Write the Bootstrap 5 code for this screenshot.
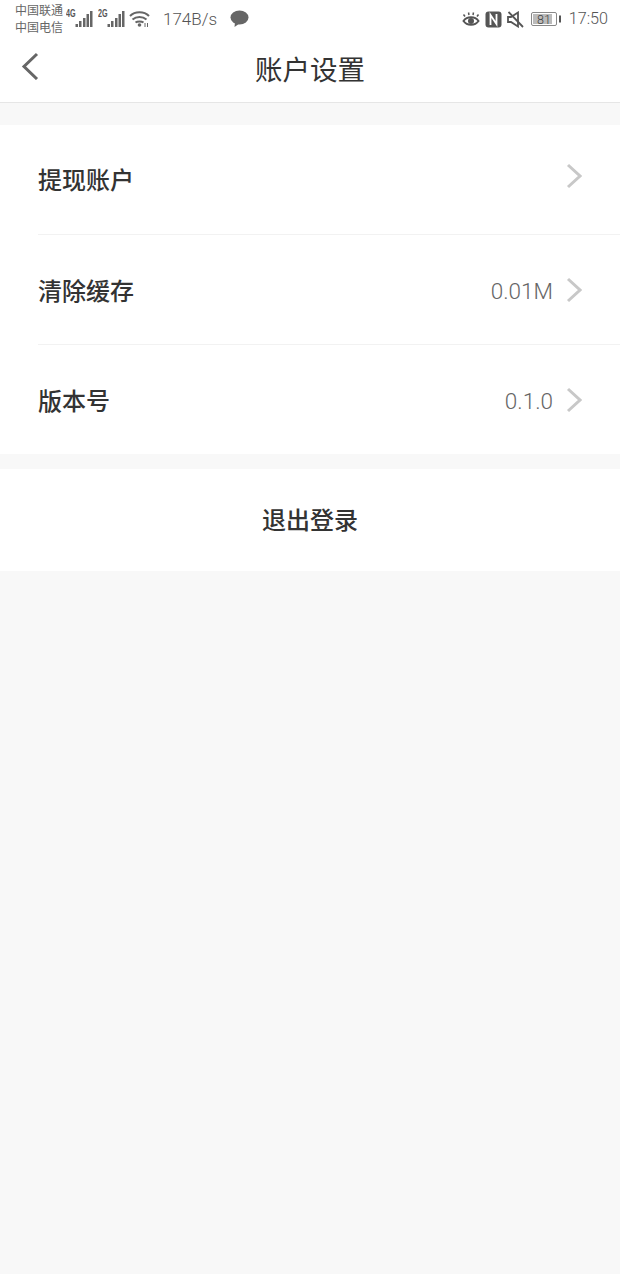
<!DOCTYPE html>
<html lang="zh">
<head>
<meta charset="utf-8">
<title>账户设置</title>
<link rel="stylesheet" href="https://cdn.jsdelivr.net/npm/bootstrap@5.3.0/dist/css/bootstrap.min.css">
<style>
html,body{height:100%}
body{background:#f8f8f8;font-family:"Noto Sans CJK SC","Noto Sans",sans-serif;color:#333}
.screen-wrap{width:620px;height:1274px;overflow:hidden}
.top-area{height:103px;background:#fff;border-bottom:1px solid #e6e6e6}
.status-row{height:38px;padding:0 12px 0 15px;color:#555}
.carriers{font-size:12px;line-height:17px;width:51px;color:#666;margin-top:-3px}
.net-tag{font-family:"Liberation Sans",sans-serif;font-size:10px;font-weight:700;line-height:8px;color:#555;align-self:flex-start;margin-top:10px;width:9px;display:inline-block;transform:scaleX(.72);transform-origin:left top;white-space:nowrap}
.tag-second{margin-left:5px}
.icon-wifi{margin-left:4px}
.speed{font-family:"Roboto",sans-serif;font-weight:300;font-size:17px;color:#555;margin-left:13px;margin-right:13px;line-height:38px;width:54px;white-space:nowrap}
.clock{font-family:"Roboto",sans-serif;font-weight:300;font-size:16.200px;color:#555;line-height:38px;margin-left:7px}
.icon-nfc{margin-left:5px}
.icon-mute{margin-left:5px}
.icon-batt{margin-left:7px}
.title-row{height:64px}
.back-btn{left:21px;top:16px;line-height:0}
.page-title{font-size:27.500px;font-weight:400;color:#333;line-height:64px;margin-top:-2px}
.section-gap{height:22px}
.set-list{background:#fff}
.set-row{height:110px;padding-left:38px}
.set-row:last-child{height:109px}
.set-inner{height:100%;border-bottom:1px solid #f2f2f2;padding-right:38px}
.set-row:last-child .set-inner{border-bottom:0}
.set-label{font-size:24px;font-weight:500;color:#333;line-height:34px}
.label-high{margin-top:-2px}
.set-value{font-family:"Roboto",sans-serif;font-weight:300;font-size:22.500px;color:#666;margin-right:13px;line-height:34px;margin-top:2px}
.set-arrow{line-height:0;margin-top:1px}
.arrow-high{margin-top:-8px}
.logout-wrap{margin-top:15px;height:102px;background:#fff;font-size:24px;font-weight:500;color:#333;padding-bottom:2px}
</style>
</head>
<body>
<div class="screen-wrap">
  <div class="top-area">
    <div class="status-row d-flex align-items-center">
      <div class="carriers">中国联通<br>中国电信</div>
      <span class="net-tag">4G</span>
      <svg width="18" height="18" viewBox="0 0 18 18" fill="#666"><rect x=".5" y="14" width="2.500" height="3"/><rect x="4" y="11" width="2.500" height="6"/><rect x="8" y="8" width="2.500" height="9"/><rect x="11.500" y="4" width="2.500" height="13"/><rect x="15" y="1" width="2.500" height="16"/></svg>
      <span class="net-tag tag-second">2G</span>
      <svg width="18" height="18" viewBox="0 0 18 18" fill="#666"><rect x=".5" y="14" width="2.500" height="3"/><rect x="4" y="11" width="2.500" height="6"/><rect x="8" y="8" width="2.500" height="9"/><rect x="11.500" y="4" width="2.500" height="13"/><rect x="15" y="1" width="2.500" height="16"/></svg>
      <svg width="21" height="18" viewBox="0 0 21 18" class="icon-wifi" fill="none" stroke="#666" stroke-width="2"><path d="M1 6C6 1 15 1 20 6"/><path d="M3.500 9.500C7.500 6 13.500 6 17.500 9.500"/><path d="M6.500 12.500C8.500 11 12.500 11 14.500 12.500"/><circle cx="10.500" cy="15" r="1.800" fill="#666" stroke="none"/><path d="M16 13v4M18.500 13v4" stroke-width="1"/></svg>
      <span class="speed">174B/s</span>
      <svg width="19" height="18" viewBox="0 0 19 18"><ellipse cx="9.500" cy="7.500" rx="9" ry="7" fill="#666"/><path d="M5 12l-.5 5 5-3.500z" fill="#666"/></svg>
      <div class="ms-auto d-flex align-items-center">
        <svg width="18" height="17" viewBox="0 0 18 17" fill="none" stroke="#555" stroke-width="2"><path d="M1.500 10C5 5 13 5 16.500 10C13 15 5 15 1.500 10z"/><circle cx="9" cy="10" r="3" fill="#555" stroke="none"/><path d="M3 5.500L1.500 3.500M7 4L6.500 1.500M11 4L11.500 1.500M15 5.500l1.500-2" stroke-width="1.500"/></svg>
        <svg width="17" height="17" viewBox="0 0 17 17" class="icon-nfc" fill="none"><rect x=".5" y=".5" width="16" height="16" rx="3" fill="#555"/><path d="M5.500 14V4l6 9V3" stroke="#fff" stroke-width="1.800"/></svg>
        <svg width="17" height="17" viewBox="0 0 17 17" class="icon-mute" fill="none" stroke="#555" stroke-width="1.800"><path d="M1 6v5h3l7 4.500V1.500L4 6z"/><path d="M1.500 1l14.500 15"/></svg>
        <svg width="31" height="14" viewBox="0 0 31 14" class="icon-batt"><rect x=".5" y=".5" width="25" height="13" rx="1.500" fill="#fff" stroke="#888"/><rect x="2" y="2" width="19" height="10" fill="#bbb"/><text x="13" y="11.500" text-anchor="middle" font-size="12.500" fill="#444" font-family="Roboto, sans-serif" font-weight="300">81</text><rect x="28" y="3.500" width="2" height="7" fill="#555"/></svg>
        <span class="clock">17:50</span>
      </div>
    </div>
    <div class="title-row position-relative text-center">
      <a class="back-btn position-absolute" href="#" aria-label="返回"><svg width="18" height="28" viewBox="0 0 18 28" fill="none" stroke="#666" stroke-width="3"><path d="M16 2L3 14.500 16 27"/></svg></a>
      <div class="page-title">账户设置</div>
    </div>
  </div>
  <div class="section-gap"></div>
  <div class="set-list">
    <div class="set-row"><div class="set-inner d-flex align-items-center"><span class="set-label label-high">提现账户</span><span class="ms-auto set-arrow arrow-high"><svg width="16" height="26" viewBox="0 0 16 26" fill="none" stroke="#c8c8c8" stroke-width="3"><path d="M2 2l12 11L2 24"/></svg></span></div></div>
    <div class="set-row"><div class="set-inner d-flex align-items-center"><span class="set-label">清除缓存</span><span class="ms-auto set-value">0.01M</span><span class="set-arrow"><svg width="16" height="26" viewBox="0 0 16 26" fill="none" stroke="#c8c8c8" stroke-width="3"><path d="M2 2l12 11L2 24"/></svg></span></div></div>
    <div class="set-row"><div class="set-inner d-flex align-items-center"><span class="set-label">版本号</span><span class="ms-auto set-value">0.1.0</span><span class="set-arrow"><svg width="16" height="26" viewBox="0 0 16 26" fill="none" stroke="#c8c8c8" stroke-width="3"><path d="M2 2l12 11L2 24"/></svg></span></div></div>
  </div>
  <div class="logout-wrap d-flex align-items-center justify-content-center">退出登录</div>
</div>
<script src="https://cdn.jsdelivr.net/npm/bootstrap@5.3.0/dist/js/bootstrap.bundle.min.js"></script>
</body>
</html>
